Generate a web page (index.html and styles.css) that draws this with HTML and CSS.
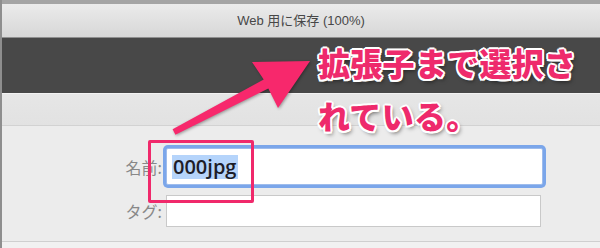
FILE: index.html
```html
<!DOCTYPE html>
<html lang="ja">
<head>
    <meta charset="UTF-8">
    <meta name="viewport" content="width=device-width, initial-scale=1.0">
    <title>Web 用に保存</title>
    <link rel="stylesheet" href="styles.css">
</head>
<body>
    <div class="window">
        <div class="titlebar">Web 用に保存 (100%)</div>
        <div class="dark-band"></div>
        <div class="toolbar"></div>

        <div class="panel">
            <div class="form">
                <label class="field-label">名前:</label>
                <div class="field focused">
                    <span class="selected">000jpg</span>
                </div>
                <label class="field-label">タグ:</label>
                <div class="field"></div>
            </div>
        </div>
        <div class="footer"></div>

        <!-- annotation layer -->
        <div class="highlight-box"></div>
        <svg class="arrow" width="600" height="248" viewBox="0 0 600 248">
            <polygon points="170.6,129.3 261.7,79.6 250,62 308,61 276,108 266.3,88.4 173.4,134.7" />
        </svg>
        <div class="callout">
            <div>拡張子まで選択さ</div>
            <div>れている。</div>
        </div>
    </div>
</body>
</html>
```

FILE: styles.css
```css
html, body {
    margin: 0;
    padding: 0;
}
body {
    width: 600px;
    height: 248px;
    overflow: hidden;
    background: #ececec;
    font-family: "Liberation Sans", "Noto Sans CJK JP", sans-serif;
}
.window {
    position: relative;
    height: 248px;
    border-left: 2px solid #8e8e8e;
    box-sizing: border-box;
}
.titlebar {
    height: 33px;
    border-top: 4px solid #a4a4a4;
    border-bottom: 1px solid #8f8f8f;
    background: linear-gradient(#ebebeb, #d7d7d7);
    text-align: center;
    font-size: 13px;
    line-height: 33px;
    color: #474747;
}
.dark-band {
    height: 55px;
    background: #484848;
}
.toolbar {
    height: 31px;
    border-top: 1px solid #f2f2f2;
    border-bottom: 1px solid #d2d2d2;
    background: linear-gradient(#e6e6e6, #e2e2e2);
}
.panel {
    height: 116px;
    padding-top: 22px;
    box-sizing: border-box;
    background: #ececec;
    border-bottom: 1px solid #cfcfcf;
}
.form {
    display: grid;
    grid-template-columns: 164px 375px;
    row-gap: 10px;
    align-items: center;
}
.field-label {
    text-align: right;
    padding-right: 4px;
    font-size: 16px;
    color: #888;
    font-family: "Noto Sans CJK JP", sans-serif;
}
.field {
    height: 32px;
    background: #fff;
    border: 1px solid #c9c9c9;
    box-sizing: border-box;
}
.field.focused {
    height: 37px;
    margin-right: -2px;
    border: 1px solid #9ebcec;
    border-radius: 2px;
    box-shadow: 0 0 0 3px #7ba6ea;
    display: flex;
    align-items: center;
    padding-left: 5px;
}
.selected {
    background: #b5d4fb;
    font-family: "Open Sans", "Noto Sans", sans-serif;
    font-size: 20px;
    font-weight: 600;
    line-height: 24px;
    padding: 0 2px 0 1px;
    color: #1d1d28;
}
.footer {
    height: 6px;
    background: #f1f1f1;
}
.highlight-box {
    position: absolute;
    left: 146px;
    top: 140px;
    width: 100px;
    height: 57px;
    border: 3px solid #f0296b;
    border-radius: 2px;
}
.arrow {
    position: absolute;
    left: 0;
    top: 0;
    filter: drop-shadow(1px 1px 1.5px rgba(0, 0, 0, 0.35));
}
.arrow polygon {
    fill: #f7286c;
}
.callout {
    position: absolute;
    left: 316px;
    top: 36px;
    font-family: "Noto Sans CJK JP", sans-serif;
    font-weight: 900;
    font-size: 32px;
    line-height: 53px;
    letter-spacing: 0.3px;
    color: #ee2a6c;
    text-shadow:
        2px 0 0 #fff, -2px 0 0 #fff, 0 2px 0 #fff, 0 -2px 0 #fff,
        1.5px 1.5px 0 #fff, -1.5px -1.5px 0 #fff, 1.5px -1.5px 0 #fff, -1.5px 1.5px 0 #fff,
        2px 3px 4px rgba(0, 0, 0, 0.55);
}
```
